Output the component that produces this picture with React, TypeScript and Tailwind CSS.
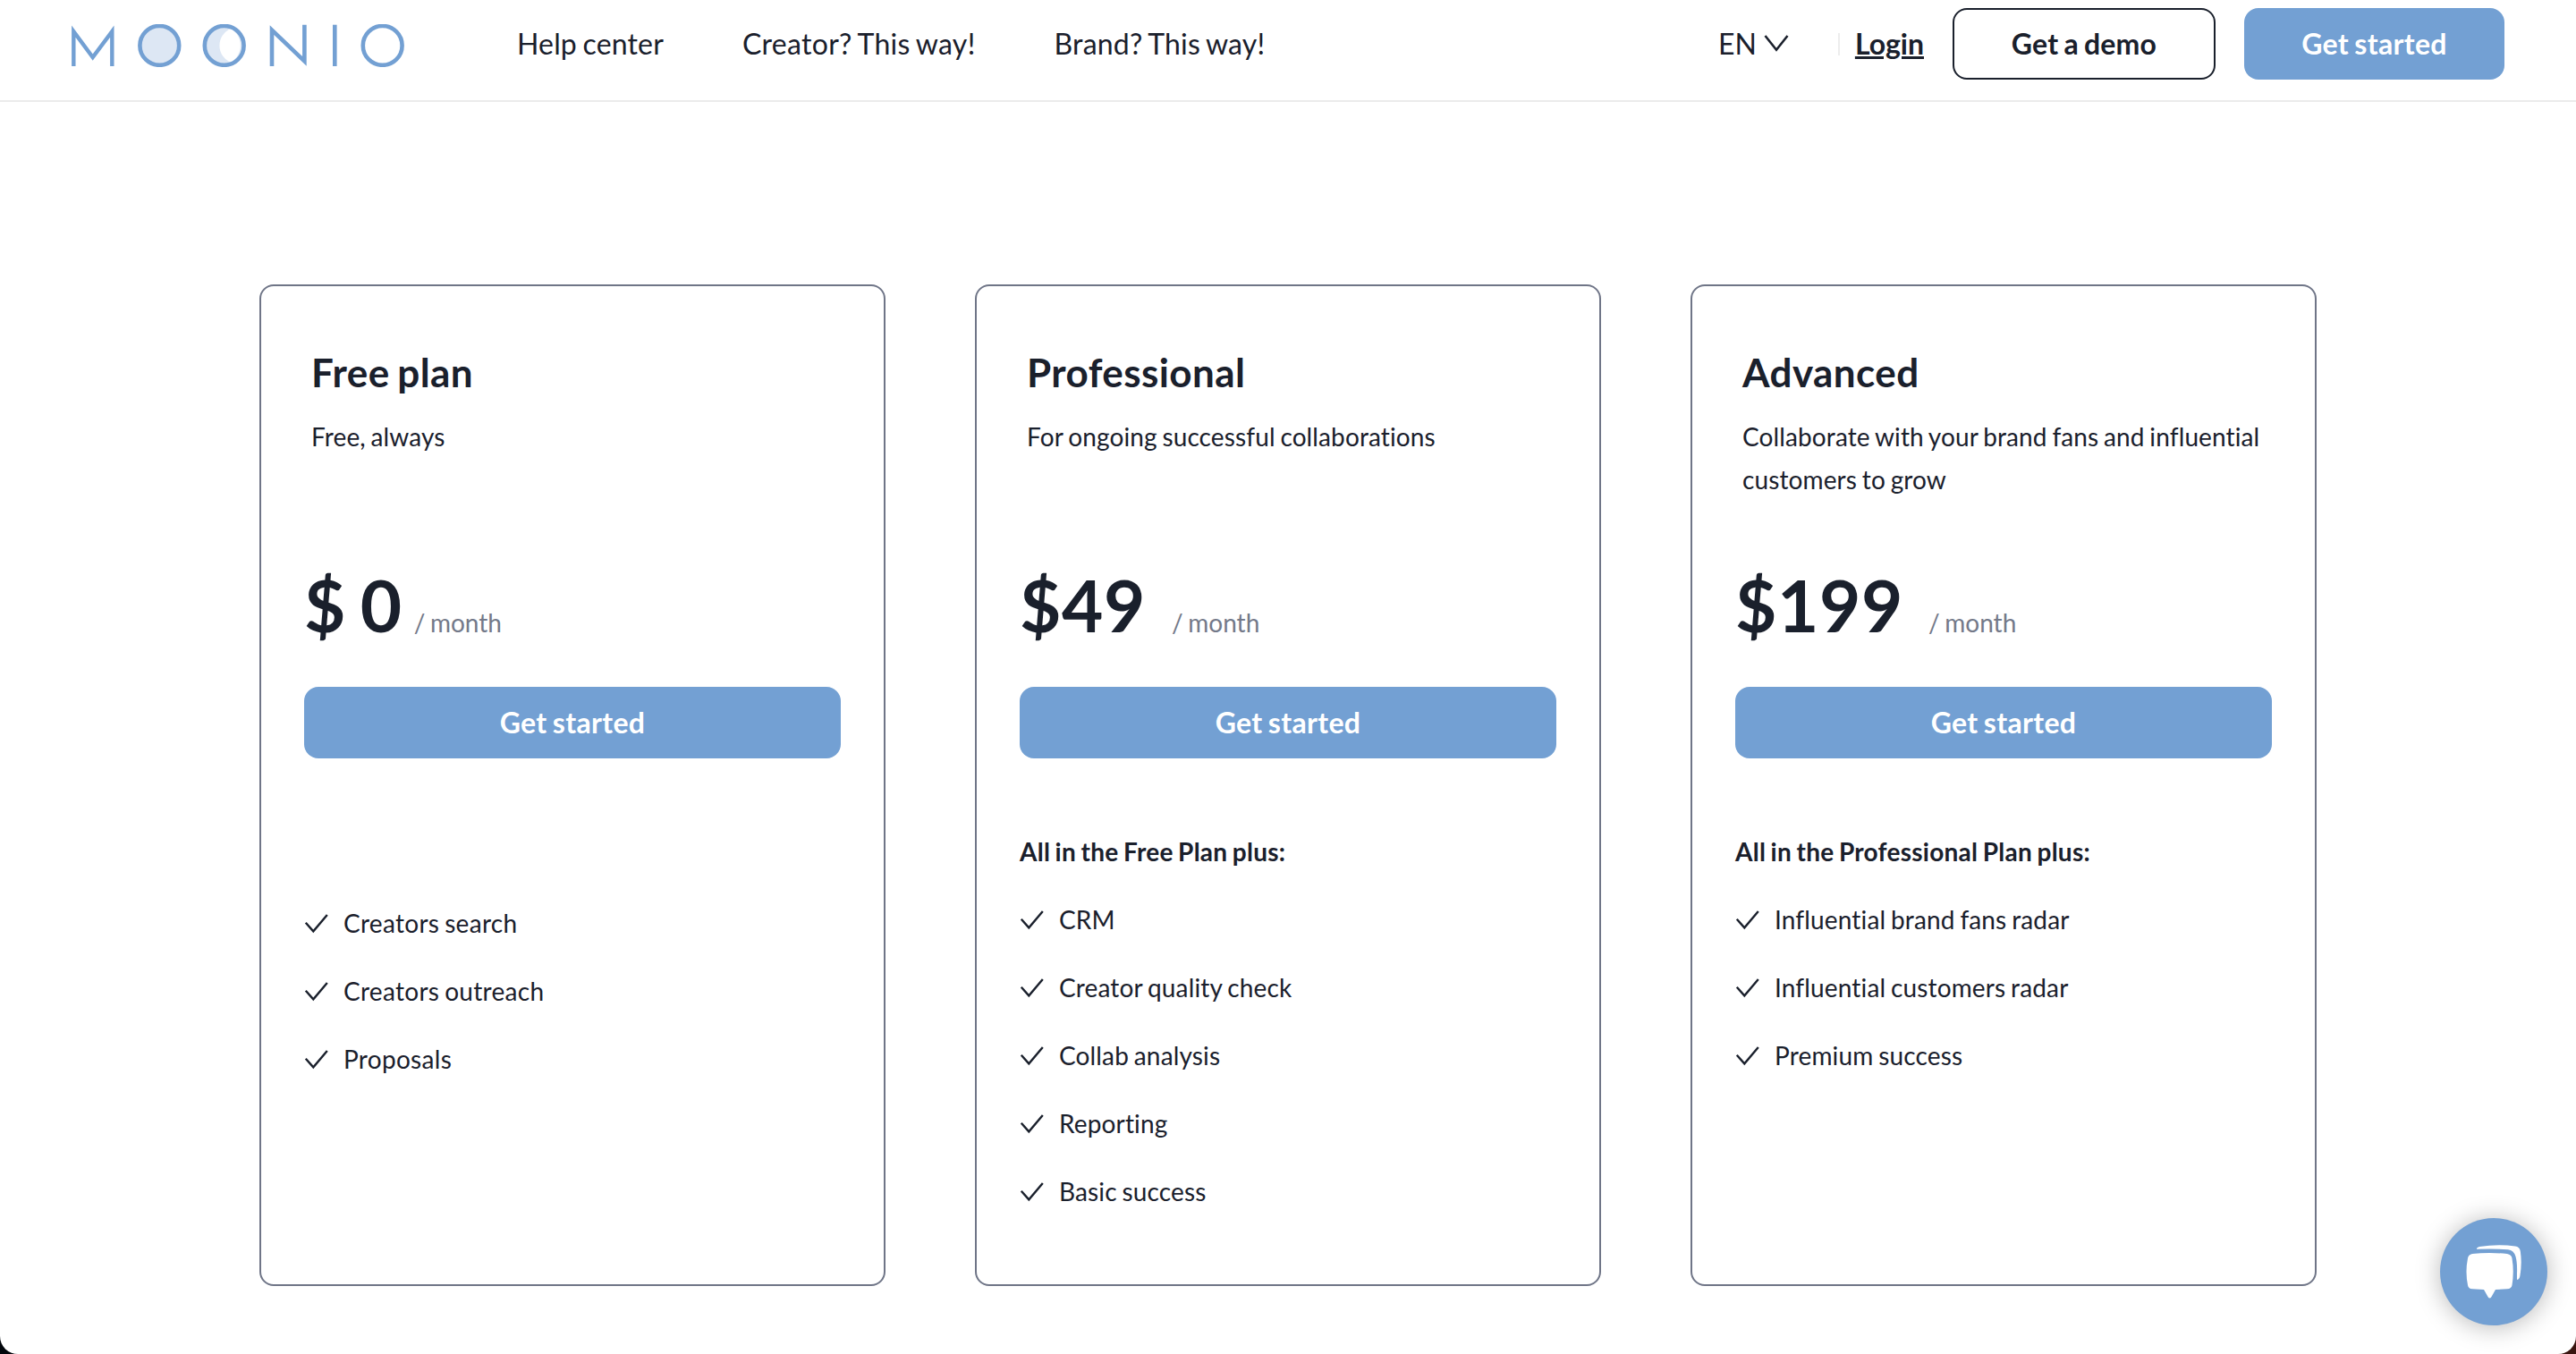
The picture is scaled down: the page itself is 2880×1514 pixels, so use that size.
type Plan = {
  name: string;
  description: string;
  price: string;
  priceGap: string;
  heading?: string;
  listTracking: string;
  features: string[];
};

const plans: Plan[] = [
  {
    name: "Free plan",
    description: "Free, always",
    price: "$ 0",
    priceGap: "ml-[13px]",
    listTracking: "tracking-[0.3px]",
    features: ["Creators search", "Creators outreach", "Proposals"],
  },
  {
    name: "Professional",
    description: "For ongoing successful collaborations",
    price: "$49",
    priceGap: "ml-[29px]",
    heading: "All in the Free Plan plus:",
    listTracking: "tracking-[0.15px]",
    features: ["CRM", "Creator quality check", "Collab analysis", "Reporting", "Basic success"],
  },
  {
    name: "Advanced",
    description: "Collaborate with your brand fans and influential customers to grow",
    price: "$199",
    priceGap: "ml-[28px]",
    heading: "All in the Professional Plan plus:",
    listTracking: "tracking-[0.15px]",
    features: ["Influential brand fans radar", "Influential customers radar", "Premium success"],
  },
];

function Logo() {
  return (
    <svg className="block h-12 w-[373px]" viewBox="0 0 373 48" fill="none" stroke="#73a0d3" strokeWidth="4.6" strokeMiterlimit="10">
      <path d="M2.3 47V8.1L23.7 37L45.3 8.1V47" strokeWidth="4.4" />
      <circle cx="98.3" cy="23.9" r="21.9" fill="#dde7f4" />
      <circle cx="170.7" cy="23.9" r="21.9" fill="#dde7f4" stroke="none" />
      <path d="M178 5A20.500 20.500 0 0 0 178 42.800A21.900 21.900 0 0 0 178 5Z" fill="#fff" stroke="none" />
      <circle cx="170.7" cy="23.9" r="21.9" />
      <path d="M224 47V6.600L260.400 41.400V0.700" />
      <path d="M294.300 0.700V47" />
      <circle cx="347.7" cy="23.9" r="21.9" />
    </svg>
  );
}

function Check() {
  return (
    <svg className="mr-4 h-6 w-7 shrink-0" viewBox="0 0 28 24" fill="none" stroke="#1a202c" strokeWidth="2.4">
      <path d="M1.800 11.700L10.300 21.300L25.800 3" />
    </svg>
  );
}

function Header() {
  return (
    <header className="flex h-[114px] items-start border-b-2 border-[#ebebeb] px-20 pt-[9px]">
      <div className="flex h-20 flex-1 items-center">
        <div className="pt-1">
          <Logo />
        </div>
        <nav className="ml-[125px] flex gap-[88px]">
          <a className="tracking-[0.16px]">Help center</a>
          <a className="tracking-[0.3px]">Creator? This way!</a>
          <a className="tracking-[0.2px]">Brand? This way!</a>
        </nav>
        <div className="ml-auto flex items-center">
          <span>EN</span>
          <svg className="ml-2 h-5 w-7" viewBox="0 0 28 20" fill="none" stroke="#1a202c" strokeWidth="2.6">
            <path d="M1.500 1L14 16.700L26.500 1" />
          </svg>
          <span className="ml-[55px] h-[25px] w-0.5 bg-[#ededed]" />
          <a className="ml-[17px] font-bold underline decoration-[3px] underline-offset-[2px]">Login</a>
          <button className="ml-8 h-20 w-[294px] rounded-2xl border-2 border-[#1a202c] font-bold tracking-[0.17px]">Get a demo</button>
          <button className="ml-8 h-20 w-[291px] rounded-2xl bg-[#73a0d3] font-bold tracking-[0.33px] text-white">Get started</button>
        </div>
      </div>
    </header>
  );
}

function PlanCard({ plan }: { plan: Plan }) {
  return (
    <section className="h-[1120px] w-[700px] rounded-2xl border-2 border-[#6f7587] px-12 pt-[66px]">
      <div className="px-2">
        <h2 className="text-[44px] leading-[60px] font-bold tracking-[0.42px]">{plan.name}</h2>
        <p className="mt-[18px] h-24 text-[28px] leading-[48px] tracking-[0.12px]">{plan.description}</p>
      </div>
      <div className="mt-[68px] flex items-baseline">
        <span className="text-[80px] leading-[96px] font-bold tracking-[0.6px]">{plan.price}</span>
        <span className={`${plan.priceGap} text-[28px] leading-[48px] text-[#737989]`}>/ month</span>
      </div>
      <button className="mt-11 block h-20 w-full rounded-2xl bg-[#73a0d3] font-bold tracking-[0.33px] text-white">Get started</button>
      {plan.heading ? (
        <h3 className="mt-20 mb-7 text-[28px] leading-[48px] font-bold tracking-[0.25px]">{plan.heading}</h3>
      ) : (
        <div className="h-40" />
      )}
      <ul className={`flex flex-col gap-7 text-[28px] leading-[48px] ${plan.listTracking}`}>
        {plan.features.map((feature) => (
          <li key={feature} className="flex items-center">
            <Check />
            {feature}
          </li>
        ))}
      </ul>
    </section>
  );
}

function ChatButton() {
  return (
    <button className="absolute right-8 bottom-8 h-[120px] w-[120px] rounded-full bg-[#73a0d3] shadow-[0_2px_28px_rgba(0,0,0,0.28)]">
      <svg className="h-[120px] w-[120px]" viewBox="0 0 120 120" fill="#fff">
        <path d="M36 40Q55 38 75 40Q80 41 80.500 45Q83 60 80.500 75Q80 79 75 79.300L62 80L57.500 88Q55.500 91 53.500 88L49 80L36 79.300Q31.500 79 31 75Q28 60 31 45Q31.500 41 36 40Z" />
        <path d="M41 34.800Q40.500 32.800 44 32Q65 29 84 31.500Q89 32 89.800 37Q91.800 50 89.500 64Q89 68.500 86 69V62Q86.500 50 84.500 43Q82.500 36 76 35.300Q60 34 41 34.800Z" />
      </svg>
    </button>
  );
}

export default function App() {
  return (
    <div className="h-[1514px] w-[2880px] overflow-hidden bg-gradient-to-r from-[#02060c] to-[#3a1510]">
      <div className="relative h-full overflow-hidden rounded-b-[20px] bg-white font-['Lato',sans-serif] text-[32px] leading-[38px] text-[#1a202c] [&_*]:[word-spacing:-0.055em]">
        <Header />
        <main className="flex justify-center gap-[100px] pt-[204px]">
          {plans.map((plan) => (
            <PlanCard key={plan.name} plan={plan} />
          ))}
        </main>
        <ChatButton />
      </div>
    </div>
  );
}
